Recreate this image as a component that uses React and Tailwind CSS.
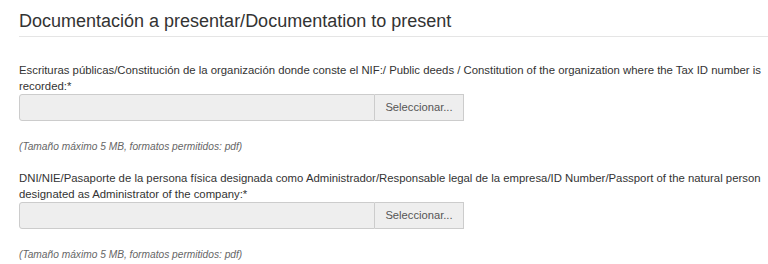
const fields = [
  {
    label:
      "Escrituras públicas/Constitución de la organización donde conste el NIF:/ Public deeds / Constitution of the organization where the Tax ID number is recorded:*",
  },
  {
    label:
      "DNI/NIE/Pasaporte de la persona física designada como Administrador/Responsable legal de la empresa/ID Number/Passport of the natural person designated as Administrator of the company:*",
  },
];

const FileField = ({ label }) => (
  <div className="mb-[16px]">
    <label className="block text-[11.35px] leading-[16px] text-[#333]">{label}</label>
    <div className="flex h-[27px] w-[445px]">
      <div className="w-[356px] rounded-l-[3px] border border-[#ccc] bg-[#eeeeee]" />
      <button className="w-[89px] border border-l-0 border-[#ccc] bg-[#eeeeee] text-[11.2px] text-[#555]">
        Seleccionar...
      </button>
    </div>
    <p className="mt-[19px] text-[10.2px] leading-[14px] italic text-[#666]">
      (Tamaño máximo 5 MB, formatos permitidos: pdf)
    </p>
  </div>
);

export default function App() {
  return (
    <div className="w-[768px] h-[264px] overflow-hidden bg-white pl-[19px] font-['Liberation_Sans',Arial,sans-serif]">
      <h3 className="pt-[11px] pb-[5px] text-[18px] leading-[20px] text-[#333] border-b border-[#e5e5e5]">
        Documentación a presentar/Documentation to present
      </h3>
      <div className="pt-[25px]">
        {fields.map((f, i) => (
          <FileField key={i} label={f.label} />
        ))}
      </div>
    </div>
  );
}
